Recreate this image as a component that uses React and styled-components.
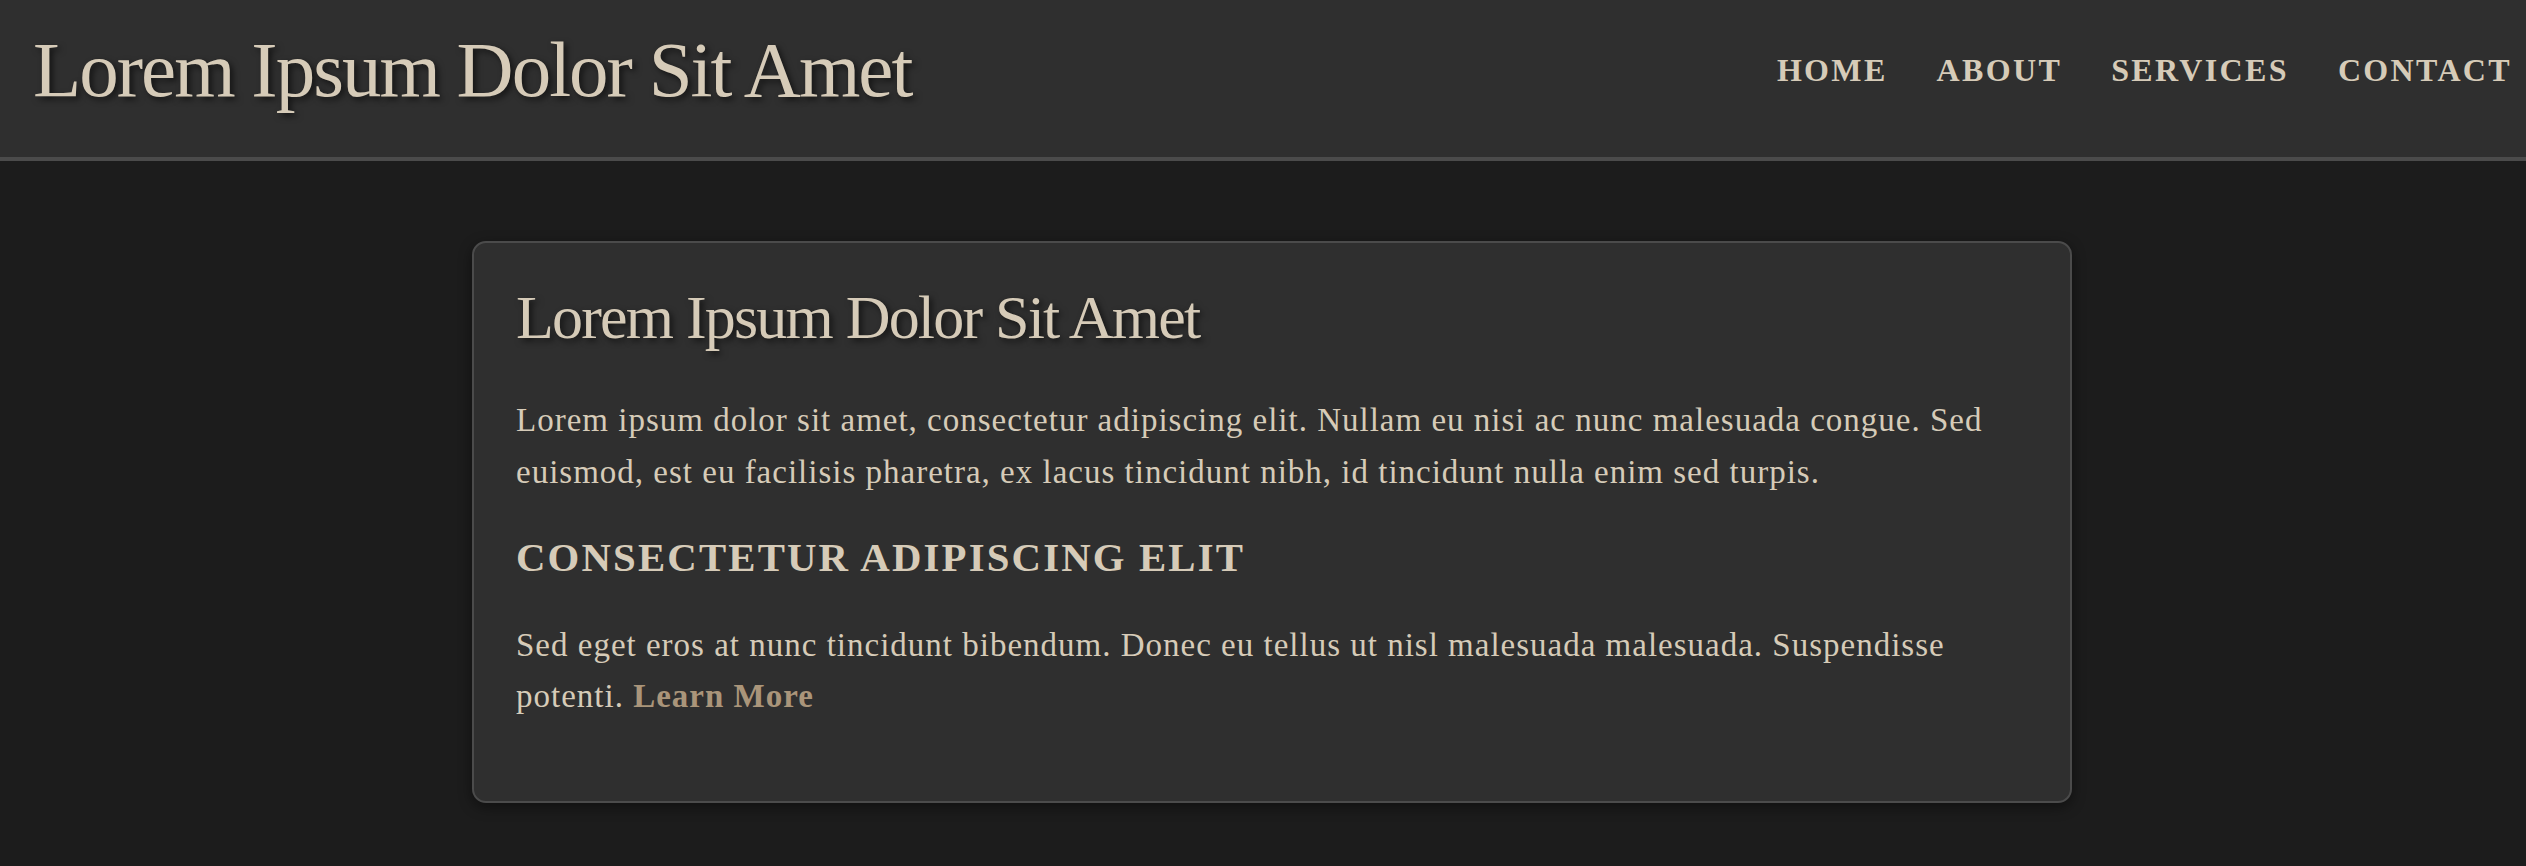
import React from 'react';
import styled, { createGlobalStyle } from 'styled-components';

const GlobalStyle = createGlobalStyle`
  html, body {
    margin: 0;
    padding: 0;
    background-color: #1c1c1c;
    color: #d6cbb8;
    font-family: "Palatino Linotype", "Book Antiqua", Palatino, "Liberation Serif", serif;
  }
`;

const Header = styled.header`
  display: flex;
  justify-content: space-between;
  align-items: center;
  height: 161px;
  box-sizing: border-box;
  padding: 0 14px 16px 33px;
  background-color: #2f2f2f;
  border-bottom: 4px solid #4b4b4b;
`;

const SiteTitle = styled.h1`
  margin: 0;
  font-size: 79px;
  line-height: 1.2;
  font-weight: 400;
  letter-spacing: -2px;
  color: #d6cbb8;
  text-shadow: 3px 3px 6px rgba(0, 0, 0, 0.6);
`;

const Nav = styled.nav`
  display: flex;
  gap: 49px;
`;

const NavLink = styled.a`
  color: #d6cbb8;
  text-decoration: none;
  text-transform: uppercase;
  font-size: 32px;
  font-weight: 700;
  letter-spacing: 2.35px;
`;

const Main = styled.main`
  padding: 80px 0 60px 18px;
`;

const Card = styled.section`
  max-width: 1600px;
  margin: 0 auto;
  box-sizing: border-box;
  padding: 37px 42px 43px;
  background-color: #2f2f2f;
  border: 2px solid #4b4b4b;
  border-radius: 14px;
  box-shadow: 0 4px 14px rgba(0, 0, 0, 0.45);
`;

const CardTitle = styled.h2`
  margin: 0 0 41px;
  font-size: 62px;
  line-height: 1.2;
  font-weight: 400;
  letter-spacing: -1.8px;
  text-shadow: 3px 3px 6px rgba(0, 0, 0, 0.6);
`;

const Paragraph = styled.p`
  margin: 0 0 36px;
  font-size: 33px;
  line-height: 51.2px;
  letter-spacing: 1px;
`;

const SubTitle = styled.h3`
  margin: 2px 0 37px;
  font-size: 40.8px;
  line-height: 1.2;
  font-weight: 700;
  letter-spacing: 2.15px;
  text-transform: uppercase;
`;

const MoreLink = styled.a`
  color: #aa957a;
  font-weight: 700;
  text-decoration: none;
`;

const links = ['Home', 'About', 'Services', 'Contact'];

export default function App() {
  return (
    <>
      <GlobalStyle />
      <Header>
        <SiteTitle>Lorem Ipsum Dolor Sit Amet</SiteTitle>
        <Nav>
          {links.map((l) => (
            <NavLink key={l} href="#">{l}</NavLink>
          ))}
        </Nav>
      </Header>
      <Main>
        <Card>
          <CardTitle>Lorem Ipsum Dolor Sit Amet</CardTitle>
          <Paragraph>
            Lorem ipsum dolor sit amet, consectetur adipiscing elit. Nullam eu nisi ac nunc malesuada congue. Sed euismod, est eu facilisis pharetra, ex lacus tincidunt nibh, id tincidunt nulla enim sed turpis.
          </Paragraph>
          <SubTitle>Consectetur Adipiscing Elit</SubTitle>
          <Paragraph>
            Sed eget eros at nunc tincidunt bibendum. Donec eu tellus ut nisl malesuada malesuada. Suspendisse potenti. <MoreLink href="#">Learn More</MoreLink>
          </Paragraph>
        </Card>
      </Main>
    </>
  );
}
